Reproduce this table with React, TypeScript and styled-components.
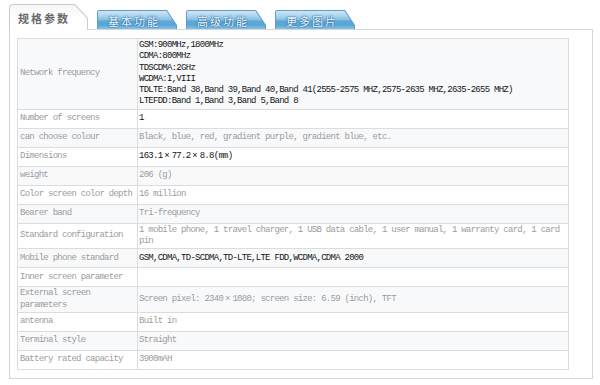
import React from "react";
import styled, { createGlobalStyle } from "styled-components";

const GlobalStyle = createGlobalStyle`
  html, body { margin: 0; padding: 0; background: #fff; }
  body { font-family: "Liberation Mono", monospace; }
`;

const Page = styled.div`
  padding: 4px 0 0 9px;
  width: 584px;
`;

const TabBar = styled.div`
  display: flex;
  align-items: flex-end;
  gap: 9px;
  height: 25px;
  position: relative;
  z-index: 1;
`;

const ActiveFrame = styled.div`
  box-sizing: border-box;
  width: 79px;
  height: 26px;
  margin-bottom: -1px;
  padding: 1px 1px 0 1px;
  background: #cbcbcb;
  border-radius: 4px 0 0 0;
  clip-path: polygon(0 0, 66px 0, 79px 14px, 79px 100%, 0 100%);
`;

const ActiveFace = styled.div`
  box-sizing: border-box;
  height: 100%;
  display: flex;
  align-items: center;
  padding: 1px 0 0 8px;
  background: linear-gradient(#f6f6f6, #ffffff 55%);
  border-radius: 3px 0 0 0;
  clip-path: polygon(0 0, 64.4px 0, 77px 13.5px, 77px 100%, 0 100%);
`;

const ActiveLabel = styled.span`
  font-family: "Noto Sans CJK SC", sans-serif;
  font-size: 11px;
  line-height: 1;
  font-weight: 700;
  letter-spacing: 2px;
  color: #6a6a6a;
`;

const BlueFrame = styled.div`
  box-sizing: border-box;
  width: 80px;
  height: 19px;
  padding: 1px 1px 0 1px;
  background: #5d9cc9;
  border-radius: 2px 0 0 0;
  clip-path: polygon(0 0, 70px 0, 80px 15px, 80px 100%, 0 100%);
`;

const BlueFace = styled.div`
  box-sizing: border-box;
  height: 100%;
  display: flex;
  align-items: center;
  padding: 2px 0 0 10px;
  background: linear-gradient(
    #cfe6f3 0%,
    #a9d2ea 30%,
    #86c0e4 48%,
    #5ea8d8 56%,
    #5aa5d6 78%,
    #86c4e6 100%
  );
  clip-path: polygon(0 0, 68.5px 0, 78px 14.3px, 78px 100%, 0 100%);
`;

const BlueLabel = styled.span`
  font-family: "Noto Sans CJK SC", sans-serif;
  font-size: 11px;
  line-height: 1;
  letter-spacing: 2px;
  color: #eef7fc;
  text-shadow: 0 0 1px #2b6c9f, 0 0 1px #2b6c9f, 0 0 2px #3a7db0;
`;

const Panel = styled.div`
  box-sizing: border-box;
  width: 584px;
  border: 1px solid #d6d6d6;
  padding: 8px 22px 8px 7px;
  background: #fff;
`;

const SpecTable = styled.table`
  width: 552px;
  border-collapse: collapse;
  table-layout: fixed;
  font-family: "Liberation Mono", monospace;
  font-size: 9px;
  line-height: 11.3px;
  letter-spacing: -0.73px;
`;

const LabelCol = styled.col`
  width: 120px;
`;

const Row = styled.tr<{ $alt: boolean }>`
  background: ${(p) => (p.$alt ? "#f8f9fb" : "#ffffff")};
`;

const LabelCell = styled.td`
  height: 16px;
  border: 1px solid #dcdcdc;
  padding: 1px 0 1px 2px;
  color: #9c9c9c;
  vertical-align: middle;
  word-wrap: break-word;
`;

const ValueCell = styled.td<{ $dark: boolean }>`
  border: 1px solid #dcdcdc;
  padding: 1px 0 1px 1px;
  color: ${(p) => (p.$dark ? "#151515" : "#9c9c9c")};
  vertical-align: middle;
`;

const Line = styled.div`
  white-space: nowrap;
`;

const Wide = styled.span`
  display: inline-block;
  width: 9.34px;
  text-align: center;
  letter-spacing: 0;
`;

type Spec = { label: string; value: React.ReactNode; dark?: boolean };

const X = () => <Wide>×</Wide>;

const specs: Spec[] = [
  {
    label: "Network frequency",
    dark: true,
    value: (
      <>
        <Line>GSM:900MHz,1800MHz</Line>
        <Line>CDMA:800MHz</Line>
        <Line>TDSCDMA:2GHz</Line>
        <Line>WCDMA:I,VIII</Line>
        <Line>
          TDLTE:Band 38,Band 39,Band 40,Band 41(2555-2575 MHZ,2575-2635 MHZ,2635-2655 MHZ)
        </Line>
        <Line>LTEFDD:Band 1,Band 3,Band 5,Band 8</Line>
      </>
    ),
  },
  { label: "Number of screens", value: "1", dark: true },
  {
    label: "can choose colour",
    value: "Black, blue, red, gradient purple, gradient blue, etc.",
  },
  {
    label: "Dimensions",
    dark: true,
    value: (
      <>
        163.1<X />77.2<X />8.8(mm)
      </>
    ),
  },
  { label: "weight", value: "206 (g)" },
  { label: "Color screen color depth", value: "16 million" },
  { label: "Bearer band", value: "Tri-frequency" },
  {
    label: "Standard configuration",
    value:
      "1 mobile phone, 1 travel charger, 1 USB data cable, 1 user manual, 1 warranty card, 1 card pin",
  },
  {
    label: "Mobile phone standard",
    value: "GSM,CDMA,TD-SCDMA,TD-LTE,LTE FDD,WCDMA,CDMA 2000",
    dark: true,
  },
  { label: "Inner screen parameter", value: "" },
  {
    label: "External screen parameters",
    value: (
      <>
        Screen pixel: 2340<X />1080; screen size: 6.59 (inch), TFT
      </>
    ),
  },
  { label: "antenna", value: "Built in" },
  { label: "Terminal style", value: "Straight" },
  { label: "Battery rated capacity", value: "3900mAH" },
];

const tabs = ["基本功能", "高级功能", "更多图片"];

export default function App() {
  return (
    <>
      <GlobalStyle />
      <Page>
        <TabBar>
          <ActiveFrame>
            <ActiveFace>
              <ActiveLabel>规格参数</ActiveLabel>
            </ActiveFace>
          </ActiveFrame>
          {tabs.map((t) => (
            <BlueFrame key={t}>
              <BlueFace>
                <BlueLabel>{t}</BlueLabel>
              </BlueFace>
            </BlueFrame>
          ))}
        </TabBar>
        <Panel>
          <SpecTable>
            <colgroup>
              <LabelCol />
              <col />
            </colgroup>
            <tbody>
              {specs.map((s, i) => (
                <Row key={s.label} $alt={i % 2 === 0}>
                  <LabelCell>{s.label}</LabelCell>
                  <ValueCell $dark={!!s.dark}>{s.value}</ValueCell>
                </Row>
              ))}
            </tbody>
          </SpecTable>
        </Panel>
      </Page>
    </>
  );
}
